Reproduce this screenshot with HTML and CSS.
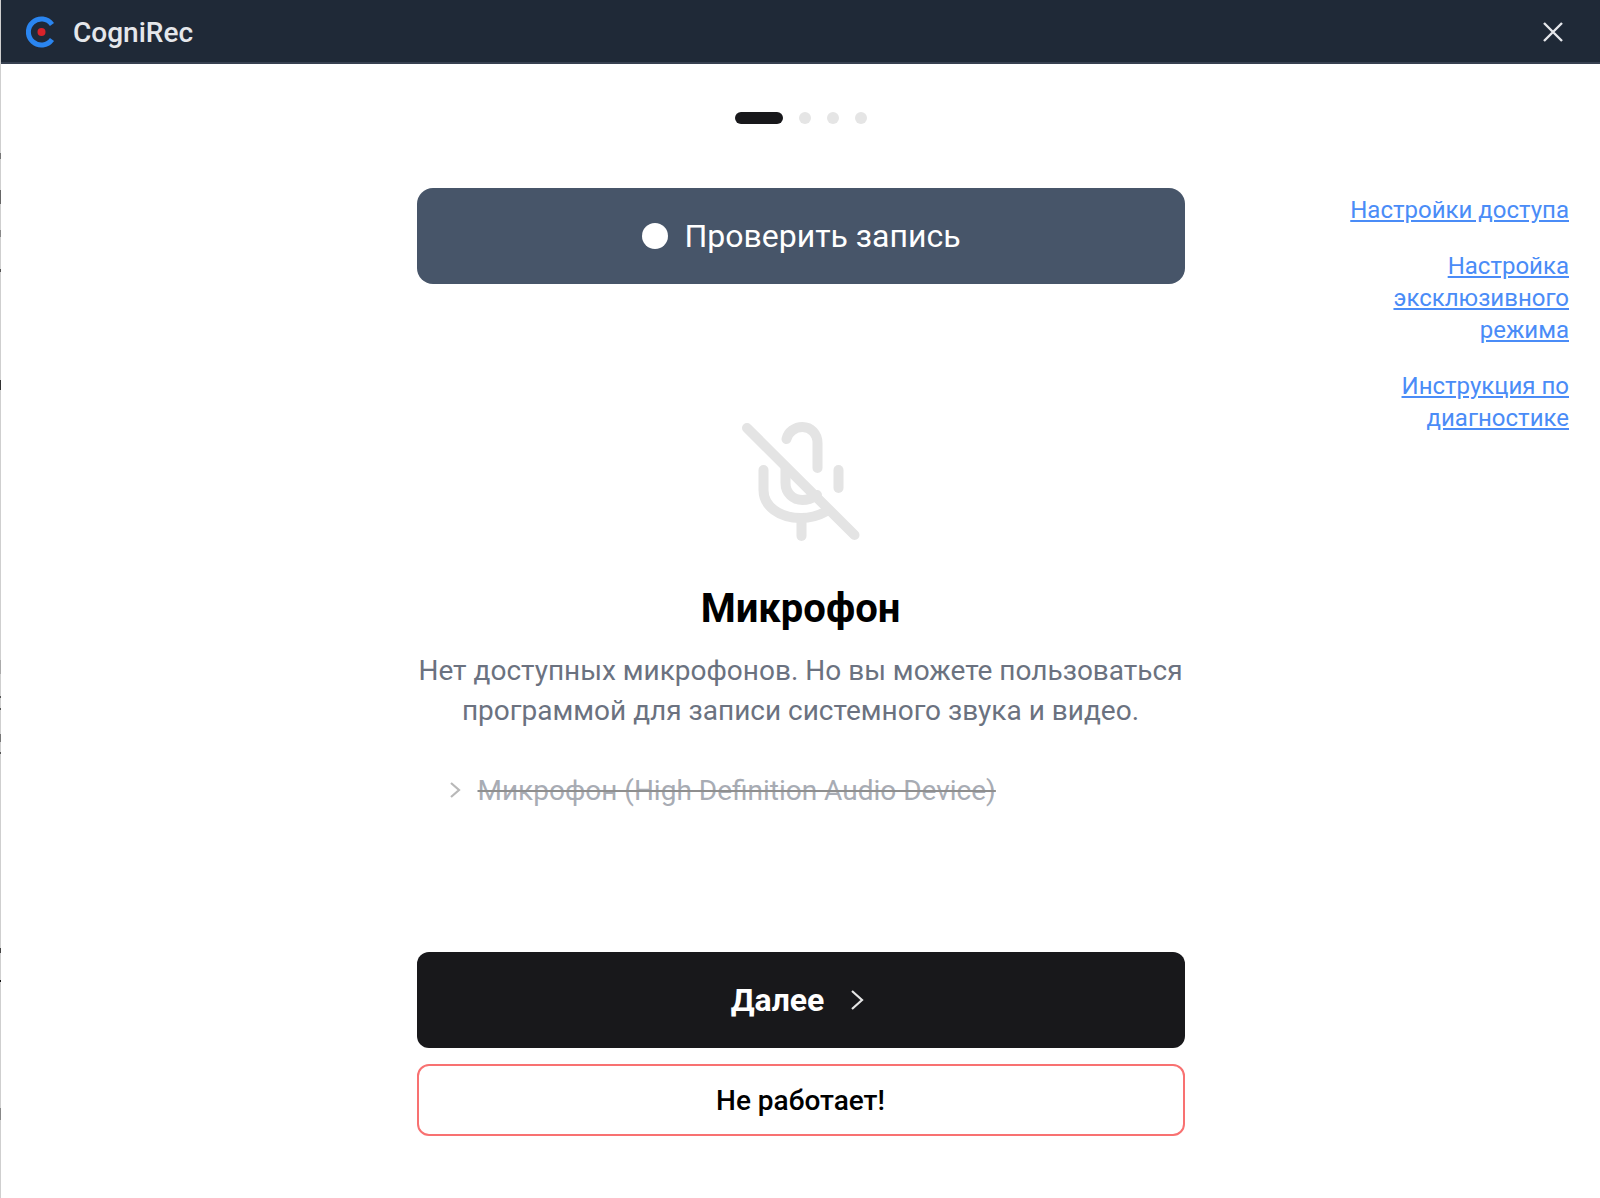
FILE: index.html
```html
<!DOCTYPE html>
<html lang="ru">
<head>
    <meta charset="UTF-8">
    <title>CogniRec</title>
    <link rel="stylesheet" href="styles.css">
</head>
<body>
    <header class="titlebar">
        <div class="brand">
            <svg class="logo" width="30" height="32" viewBox="0 0 30 32">
                <path d="M26 8.5A13 13 0 1 0 26 23.5" fill="none" stroke="#2a85f0" stroke-width="5"/>
                <circle cx="15.5" cy="16" r="4" fill="#d8232a"/>
            </svg>
            <span class="brand-name">CogniRec</span>
        </div>
        <svg class="close" width="20" height="20" viewBox="0 0 20 20">
            <path d="M1 1L19 19M19 1L1 19" stroke="#e5e7eb" stroke-width="2.4"/>
        </svg>
    </header>

    <div class="page">
        <main class="wizard">
            <div class="steps">
                <span class="step step-active"></span>
                <span class="step"></span>
                <span class="step"></span>
                <span class="step"></span>
            </div>

            <button class="btn btn-check">
                <span class="rec-dot"></span>
                Проверить запись
            </button>

            <svg class="mic-icon" width="120" height="120" viewBox="0 0 120 120" fill="none" stroke="#e4e4e4" stroke-width="10" stroke-linecap="round">
                <path d="M6 6L113.5 113"/>
                <path d="M45.5 17C47 10 54 5 61.5 5C70 5 76.5 12 76.5 21V46"/>
                <path d="M44.5 46V61C44.5 71 52 78 61.5 78C66 78 70 77 76 73"/>
                <path d="M22.5 48V68C22.5 84 38 96 60 96C69 96 77 94 84 90"/>
                <path d="M97.5 48V66"/>
                <path d="M60.5 96V114"/>
            </svg>

            <h1 class="device-title">Микрофон</h1>
            <p class="device-text">Нет доступных микрофонов. Но вы можете пользоваться программой для записи системного звука и видео.</p>

            <div class="device-list">
                <svg width="12" height="18" viewBox="0 0 12 18" fill="none" stroke="#b8b8b8" stroke-width="2.2">
                    <path d="M2 2L10 9L2 16"/>
                </svg>
                <span class="device-name">Микрофон (High Definition Audio Device)</span>
            </div>

            <button class="btn btn-next">
                Далее
                <svg width="14" height="22" viewBox="0 0 14 22" fill="none" stroke="#e5e5e5" stroke-width="2.2">
                    <path d="M2 2L12 11L2 20"/>
                </svg>
            </button>
            <button class="btn btn-broken">Не работает!</button>
        </main>

        <aside class="links">
            <a href="#">Настройки доступа</a>
            <a href="#">Настройка эксклюзивного режима</a>
            <a href="#">Инструкция по диагностике</a>
        </aside>
    </div>
</body>
</html>
```

FILE: styles.css
```css
* {
    margin: 0;
    padding: 0;
    box-sizing: border-box;
}

body {
    font-family: Roboto, "Liberation Sans", sans-serif;
    height: 1198px;
    background: #fff;
    color: #000;
    border-left: 1px solid #cfcfcf;
    overflow: hidden;
}

body::before {
    content: "";
    position: fixed;
    top: 0;
    left: 0;
    width: 1px;
    height: 1198px;
    background: linear-gradient(to bottom,
        transparent 153px, #777 153px, #777 159px,
        transparent 159px, transparent 190px, #666 190px, #666 204px,
        transparent 204px, transparent 230px, #888 230px, #888 237px,
        transparent 237px, transparent 269px, #555 269px, #555 272px,
        transparent 272px, transparent 380px, #333 380px, #333 390px,
        transparent 390px, transparent 660px, #aaa 660px, #aaa 674px,
        transparent 674px, transparent 696px, #555 696px, #555 698px,
        transparent 698px, transparent 708px, #555 708px, #555 710px,
        transparent 710px, transparent 734px, #777 734px, #777 742px,
        transparent 742px, transparent 752px, #555 752px, #555 754px,
        transparent 754px, transparent 948px, #444 948px, #444 953px,
        transparent 953px, transparent 980px, #111 980px, #111 982px,
        transparent 982px, transparent 1108px, #888 1108px, #888 1120px,
        transparent 1120px);
}

.titlebar {
    display: flex;
    align-items: center;
    justify-content: space-between;
    height: 64px;
    padding: 2px 37px 0 25px;
    background: #1f2937;
    border-bottom: 2px solid #374151;
}

.brand {
    display: flex;
    align-items: center;
    gap: 17px;
}

.brand-name {
    font-size: 28px;
    font-weight: 500;
    color: #e5e7eb;
}

.page {
    position: relative;
    display: flex;
    justify-content: center;
}

.wizard {
    display: flex;
    flex-direction: column;
    align-items: center;
    width: 768px;
}

.steps {
    display: flex;
    align-items: center;
    gap: 16px;
    margin-top: 48px;
    height: 12px;
}

.step {
    width: 12px;
    height: 12px;
    border-radius: 50%;
    background: #e5e5e5;
}

.step-active {
    width: 48px;
    border-radius: 6px;
    background: #18181b;
}

.btn {
    display: flex;
    align-items: center;
    justify-content: center;
    width: 100%;
    border: none;
    border-radius: 12px;
    font-family: inherit;
    cursor: pointer;
}

.btn-check {
    gap: 16px;
    height: 96px;
    margin-top: 64px;
    padding-left: 2px;
    border-radius: 16px;
    background: #475569;
    color: #fff;
    font-size: 32px;
}

.rec-dot {
    width: 26px;
    height: 26px;
    border-radius: 50%;
    background: #fff;
}

.mic-icon {
    margin-top: 138px;
}

.device-title {
    margin-top: 43px;
    font-size: 40px;
    line-height: 48px;
    font-weight: 700;
}

.device-text {
    margin-top: 18px;
    font-size: 28px;
    line-height: 40px;
    color: #6b7280;
    text-align: center;
}

.device-list {
    display: flex;
    align-items: center;
    gap: 17px;
    align-self: flex-start;
    margin-top: 39px;
    padding-left: 32px;
    height: 40px;
}

.device-name {
    font-size: 28px;
    color: #a8acb4;
    text-decoration: line-through;
    text-decoration-color: #8f8f8f;
}

.btn-next {
    gap: 26px;
    height: 96px;
    margin-top: 142px;
    padding-right: 6px;
    background: #18181b;
    color: #fff;
    font-size: 32px;
    font-weight: 700;
}

.btn-broken {
    height: 72px;
    margin-top: 16px;
    background: #fff;
    border: 2px solid #f87171;
    color: #000;
    font-size: 28px;
    font-weight: 500;
}

.links {
    position: absolute;
    top: 130px;
    right: 31px;
    display: flex;
    flex-direction: column;
    gap: 24px;
    width: 240px;
    text-align: right;
    font-size: 24px;
    line-height: 32px;
}

.links a {
    color: #4a8cf7;
}
```
